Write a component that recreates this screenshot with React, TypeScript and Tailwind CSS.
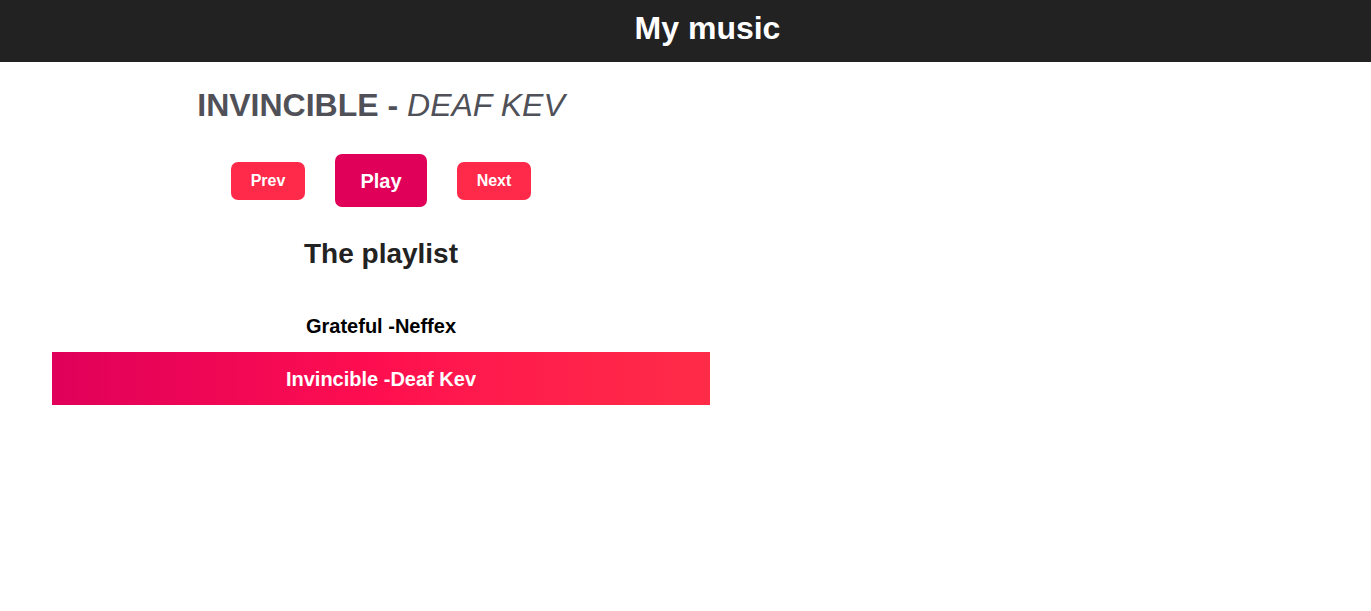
export default function App() {
  const songs = [
    { title: 'Grateful', artist: 'Neffex' },
    { title: 'Invincible', artist: 'Deaf Kev' },
  ]
  const current = 1

  return (
    <div className="min-h-screen bg-white font-['Liberation_Sans',Arial,sans-serif]">
      {/* Header */}
      <header className="h-[62px] bg-[#222222] flex items-center justify-center pl-[44px] pb-[6px]">
        <h1 className="text-[32px] font-bold text-white leading-none">My music</h1>
      </header>

      <div className="ml-[52px] w-[658px] flex flex-col items-center">
        {/* Now playing */}
        <h2 className="mt-[25px] text-[32px] leading-[37px] font-bold text-[#505158] uppercase">
          Invincible - <span className="italic font-normal">Deaf Kev</span>
        </h2>

        {/* Controls */}
        <div className="mt-[30px] flex items-center gap-[30px]">
          <button className="w-[74px] h-[38px] rounded-[7px] bg-[#ff2a4a] text-white text-[16px] font-bold">
            Prev
          </button>
          <button className="w-[92px] h-[53px] rounded-[7px] bg-[#e0005a] text-white text-[20px] font-bold">
            Play
          </button>
          <button className="w-[74px] h-[38px] rounded-[7px] bg-[#ff2a4a] text-white text-[16px] font-bold">
            Next
          </button>
        </div>

        {/* Playlist */}
        <h3 className="mt-[31px] text-[28px] leading-[32px] font-bold text-[#222222]">The playlist</h3>

        <ul className="mt-[29px] w-full">
          {songs.map((s, i) => (
            <li
              key={s.title}
              className={
                i === current
                  ? 'h-[53px] flex items-center justify-center text-[20px] font-bold text-white bg-gradient-to-r from-[#e0005a] via-[#ff0e4f] to-[#ff2b47]'
                  : 'h-[53px] flex items-center justify-center text-[20px] font-bold text-black'
              }
            >
              {s.title} -{s.artist}
            </li>
          ))}
        </ul>
      </div>
    </div>
  )
}
